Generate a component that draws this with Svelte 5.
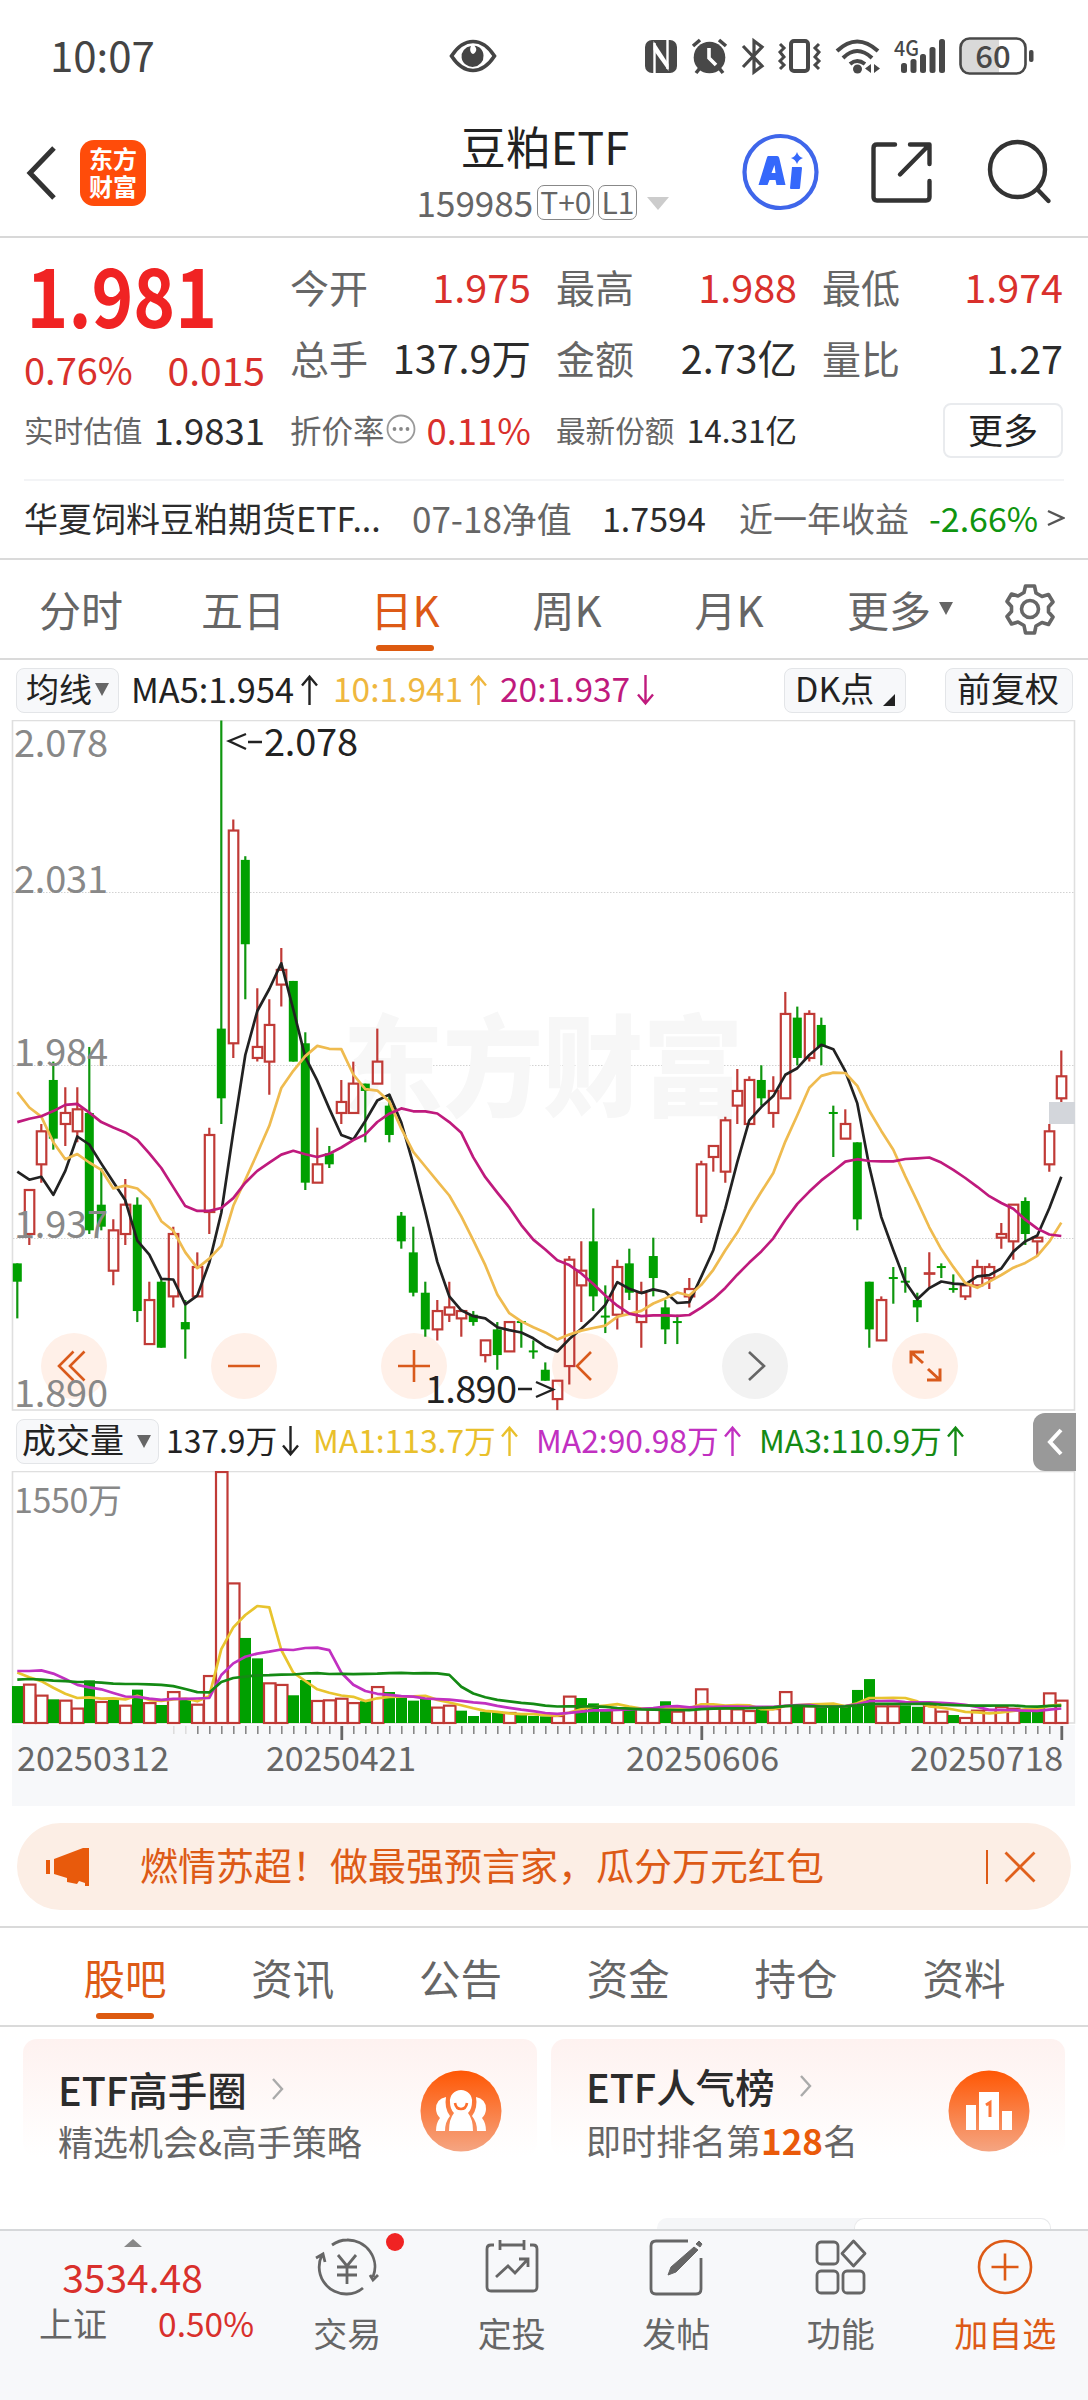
<script>
	// [open, close, high, low] in thousandths, then volume in 万
	const days = [
		[1930, 1925, 1930, 1915, 222], [1938, 1950, 1950, 1935, 237], [1957, 1966, 1968, 1952, 169],
		[1980, 1964, 1985, 1961, 140], [1968, 1971, 1978, 1962, 138], [1966, 1972, 1978, 1963, 89],
		[1971, 1939, 1989, 1938, 257], [1946, 1940, 1956, 1939, 130], [1928, 1939, 1942, 1924, 146],
		[1938, 1946, 1953, 1935, 107], [1946, 1917, 1948, 1914, 200], [1908, 1920, 1925, 1908, 123],
		[1925, 1907, 1926, 1907, 105], [1921, 1938, 1940, 1918, 191], [1914, 1912, 1920, 1904, 138],
		[1921, 1929, 1933, 1921, 113], [1944, 1965, 1967, 1938, 290], [1994, 1975, 2078, 1968, 1550],
		[1990, 2048, 2051, 1986, 862], [2040, 2017, 2041, 2002, 519], [1986, 1989, 2005, 1985, 393],
		[1985, 1995, 2002, 1976, 245], [2006, 2010, 2016, 2000, 235], [2007, 1985, 2007, 1985, 165],
		[1990, 1952, 1993, 1950, 259], [1952, 1957, 1967, 1952, 136], [1960, 1957, 1962, 1956, 140],
		[1971, 1974, 1980, 1968, 150], [1971, 1979, 1985, 1971, 123], [1979, 1977, 1979, 1963, 128],
		[1979, 1985, 1994, 1979, 222], [1973, 1965, 1976, 1963, 185], [1943, 1936, 1944, 1934, 154],
		[1933, 1922, 1940, 1921, 132], [1922, 1912, 1925, 1910, 146], [1912, 1917, 1920, 1909, 95],
		[1916, 1918, 1925, 1914, 107], [1915, 1917, 1917, 1910, 70], [1916, 1914, 1917, 1913, 37],
		[1905, 1909, 1909, 1903, 64], [1912, 1905, 1914, 1901, 64], [1906, 1914, 1914, 1906, 62],
		[1914, 1913.8, 1914, 1907, 47], [1906, 1906, 1909, 1904, 37], [1901, 1898, 1903, 1898, 35],
		[1893, 1898, 1898, 1890, 43], [1902, 1931, 1932, 1897, 163], [1924, 1928, 1936, 1914, 148],
		[1936, 1921, 1945, 1917, 115], [1915.5, 1915.5, 1924, 1911, 70], [1916, 1929, 1931, 1912, 84],
		[1930, 1922, 1934, 1920, 91], [1914, 1922, 1925, 1907, 88], [1932, 1926, 1937, 1921, 86],
		[1918, 1912, 1920, 1908, 128], [1914, 1914, 1916, 1908, 70], [1921, 1923, 1926, 1918, 82],
		[1943, 1957, 1958, 1941, 208], [1959, 1962, 1962, 1955, 90], [1955, 1969, 1970, 1952, 90],
		[1973, 1977, 1983, 1968, 84], [1968, 1980, 1981, 1968, 74], [1980, 1975, 1984, 1973, 90],
		[1971, 1977, 1981, 1967, 86], [1975, 1998, 2004, 1975, 191], [1997, 1986, 2000, 1984, 103],
		[1986, 1998, 1999, 1985, 103], [1995, 1989, 1997, 1984, 103], [1971, 1971, 1973, 1959, 99],
		[1964, 1968, 1972, 1964, 106], [1963, 1942, 1963, 1939, 198], [1925, 1912, 1925, 1907, 265],
		[1909, 1920, 1921, 1909, 103], [1926, 1926, 1929, 1919, 103], [1925, 1925, 1929, 1922, 103],
		[1920, 1918, 1922, 1914, 94], [1927.2, 1927.3, 1933, 1923, 107], [1929, 1929, 1930, 1926, 70],
		[1923, 1923, 1927, 1922, 43], [1921, 1924, 1924, 1920, 31], [1924, 1929, 1931, 1924, 76],
		[1926, 1929, 1930, 1923, 80], [1937, 1938, 1941, 1934, 99], [1936, 1946, 1946, 1931, 88],
		[1947, 1938, 1948, 1935, 80], [1936, 1937, 1937, 1932, 80], [1957, 1966, 1968, 1955, 183],
		[1975, 1981, 1988, 1974, 137.9]
	];

	const closes = days.map((d) => d[1]);
	const volumes = days.map((d) => d[4]);

	const x = (i) => 17.3 + i * 12;
	const priceY = (p) => 0.5 + (2078 - p) * 3.668;
	const volumeY = (v) => 252 - (v / 1550) * 251;

	// the window opens mid-history, so the first points of each average are given
	function average(values, size, head) {
		return values.map((_, i) => {
			if (i < size - 1) return head[i];
			let sum = 0;
			for (let k = i - size + 1; k <= i; k++) sum += values[k];
			return sum / size;
		});
	}
	const points = (values, scale) => values.map((v, i) => `${x(i)},${scale(v).toFixed(1)}`).join(' ');

	const priceLines = [
		['#222', average(closes, 5, [1955, 1952.8, 1953.6, 1948.7])],
		['#efbb4f', average(closes, 10, [1976.7, 1972.5, 1970, 1963, 1958.4, 1959.8, 1957.5, 1955.5, 1950.4])],
		['#bf1a7d', average(closes, 20, [1968.5, 1969.4, 1970.1, 1971.5, 1973.2, 1973.5, 1971.1, 1968.5, 1967, 1965.7, 1963.7, 1960, 1956, 1950.8, 1945.6, 1944.3, 1944.3, 1945.1, 1947.8])]
	];
	const volumeLines = [
		['#e8c42e', average(volumes, 5, [311, 282, 259, 218])],
		['#c130c1', average(volumes, 10, [321, 321, 325, 305, 272, 235, 220, 208, 185])],
		['#148a14', average(volumes, 20, [268, 272, 268, 261, 259, 253, 253, 249, 243, 241, 241, 239, 235, 228, 210, 191, 189, 253, 278])]
	];

	const priceLabels = [
		['2.078', 37],
		['2.031', 173],
		['1.984', 346],
		['1.937', 518],
		['1.890', 687]
	];
	const ticks = days.map((_, i) => i).filter((i) => i > 12);

	const quotes = [
		['今开', '1.975', true], ['最高', '1.988', true], ['最低', '1.974', true],
		['总手', '137.9万', false], ['金额', '2.73亿', false], ['量比', '1.27', false]
	];
	const periods = ['分时', '五日', '日K', '周K', '月K'];
	const sections = ['股吧', '资讯', '公告', '资金', '持仓', '资料'];
</script>

{#snippet arrow(up)}
	<svg class="arrow" class:down={!up} width="19" height="32" viewBox="0 0 19 32">
		<path d="M9.5 31V3M2 11.5 9.5 2.5 17 11.5" fill="none" stroke="currentColor" stroke-width="2.4" />
	</svg>
{/snippet}

<main>
	<div class="status">
		<span class="time">10:07</span>
		<svg class="eye" width="48" height="34" viewBox="0 0 48 34">
			<path d="M2.5 17Q12 2.500 24 2.500T45.500 17Q36 31.500 24 31.500T2.500 17Z" fill="none" stroke="#444" stroke-width="3.600" />
			<path d="M22 7a11 10.500 0 1 0 12.500 9.500c0-5-4-9.500-9-9.700 3 3 2 7-1.500 8.200-3-1-3.500-5-2-8Z" fill="#444" />
		</svg>
		<svg class="signals" width="430" height="50" viewBox="0 0 430 50">
			<g fill="#484848">
				<rect x="25" y="10" width="32" height="33" rx="7" />
				<path d="M34.500 43V13M47.500 10v29" fill="none" stroke="#fff" stroke-width="2.400" />
				<path d="M33.500 11l15 23v7l-15-21Z" fill="#fff" />
				<circle cx="89.500" cy="27.500" r="15.800" />
				<path d="M73 16l7-6M106 16l-7-6M80 38l-4 5M99 38l4 5" stroke="#484848" stroke-width="3.600" />
				<path d="M89 18v10l7 7" fill="none" stroke="#fff" stroke-width="3.600" />
			</g>
			<g fill="none" stroke="#484848" stroke-width="3.600">
				<path d="M123 16l19 20-8 6V11l8 6-19 20" stroke-width="3.200" />
				<rect x="171" y="11" width="17" height="30" rx="3" stroke-width="4" />
				<path d="M160 14l4 4-4 4 4 5-4 4 4 4-4 4M199 14l-4 4 4 4-4 5 4 4-4 4 4 4" stroke-width="3" />
				<path d="M217 21q20-19 41 0M223 28q14-14 29 0M230 34q7-6 15 0" stroke-width="4" />
			</g>
			<g fill="#484848">
				<circle cx="237.500" cy="39" r="4.500" />
				<path d="M251 34v9l-6-4.500ZM254 34v9l6-4.500Z" />
				<text x="274" y="26" font-size="21" font-weight="500" textLength="25" lengthAdjust="spacingAndGlyphs">4G</text>
				<rect x="281" y="33" width="6" height="10" rx="2.500" />
				<rect x="290.500" y="29" width="6" height="14" rx="2.500" />
				<rect x="300" y="24" width="6" height="19" rx="2.500" />
				<rect x="309.500" y="17" width="6" height="26" rx="2.500" />
				<rect x="319" y="9" width="6" height="34" rx="2.500" />
			</g>
			<path d="M379 9.500H350a9 9 0 0 0-9 9v15a9 9 0 0 0 9 9h29Z" fill="#d9d9d9" />
			<rect x="340.500" y="8.500" width="65" height="35" rx="9" fill="none" stroke="#484848" stroke-width="2.600" />
			<rect x="409" y="20" width="4.500" height="12" rx="2" fill="#484848" />
			<text x="373" y="37.500" font-size="31" font-weight="500" text-anchor="middle" fill="#484848">60</text>
		</svg>
	</div>

	<header>
		<svg class="back" width="34" height="56" viewBox="0 0 34 56">
			<path d="M30 3 6 28l24 25" fill="none" stroke="#333" stroke-width="5" />
		</svg>
		<div class="logo"><span>东方</span><span>财富</span></div>
		<div class="title">
			<h1>豆粕ETF</h1>
			<div class="code">
				159985<span class="tag">T+0</span><span class="tag">L1</span>
				<svg width="22" height="13" viewBox="0 0 22 13"><path d="M0 0h22L11 13Z" fill="#ccc" /></svg>
			</div>
		</div>
		<svg class="tools" width="330" height="80" viewBox="0 0 330 80">
			<circle cx="40.500" cy="40" r="36" fill="none" stroke="#3f66ea" stroke-width="4.200" />
			<path d="M28 24h9q2 0 2.500 3l6 26h-9l-1-5h-6l-2 5h-9l8-26q.8-3 1.500-3ZM31.500 41h4l-1-8Z" fill="#3568fb" fill-rule="evenodd" />
			<path d="M52 35h9q1 0 1 1l-2 20q0 1-1 1h-8q-1 0-1-1ZM57 20q1.500 5 6 6-4.500 1.500-6 6-1.500-4.500-6-6 4.500-1 6-6Z" fill="#3568fb" />
			<g fill="none" stroke="#333" stroke-width="4.400" stroke-linecap="round" stroke-linejoin="round">
				<path d="M155 12.500h-18q-3.500 0-3.500 3.500v49q0 3.500 3.500 3.500h49q3.500 0 3.500-3.500V49M170 12.500h19.500V32M189 13l-29 29.500" />
				<circle cx="277.500" cy="37.500" r="27.500" />
				<path d="M297.500 57.500 308.500 69" />
			</g>
		</svg>
	</header>

	<section class="quote">
		<div class="figures">
			<div class="price">
				<strong>1.981</strong>
				<div><span>0.76%</span><span>0.015</span></div>
			</div>
			<div class="grid">
				{#each quotes as [label, value, up]}
					<div class="pair">
						<span class="label">{label}</span>
						<span class="value" class:up>{value}</span>
					</div>
				{/each}
			</div>
		</div>
		<div class="extra">
			<div class="pair"><span>实时估值</span><b>1.9831</b></div>
			<div class="pair rate">
				<span>折价率</span>
				<svg width="30" height="30" viewBox="0 0 30 30">
					<circle cx="15" cy="15" r="13.500" fill="none" stroke="#999" stroke-width="1.800" />
					<g fill="#888"><circle cx="8.500" cy="15" r="1.900" /><circle cx="15" cy="15" r="1.900" /><circle cx="21.500" cy="15" r="1.900" /></g>
				</svg>
				<b class="up">0.11%</b>
			</div>
			<div class="pair share"><span>最新份额</span><b>14.31亿</b></div>
			<button class="more">更多</button>
		</div>
		<div class="fund">
			<span class="dark">华夏饲料豆粕期货ETF...</span>
			<span class="nav">07-18净值</span>
			<span class="dark">1.7594</span>
			<span>近一年收益</span>
			<span class="fall">-2.66%</span>
			<svg width="18" height="18" viewBox="0 0 18 18"><path d="M1 2l15 7-15 7" fill="none" stroke="#555" stroke-width="2.400" /></svg>
		</div>
	</section>

	<nav class="periods">
		{#each periods as period}
			<span class="tab" class:active={period === '日K'}>{period}</span>
		{/each}
		<span class="rest">更多<svg width="14" height="13" viewBox="0 0 14 13"><path d="M0 0h14L7 13Z" fill="#666" /></svg></span>
		<svg class="gear" width="52" height="52" viewBox="0 0 52 52" fill="none" stroke="#666" stroke-width="3.600" stroke-linejoin="round">
			<path d="M21.500 3h9l1.500 7 6 3.500 6.500-2 4.500 7.500-4.500 5v5l4.500 5-4.500 7.500-6.500-2-6 3.500-1.500 7h-9L20 42.500 14 39l-6.500 2L3 33.500l4.500-5v-5L3 18.500 7.500 11l6.500 2 6-3.500Z" />
			<circle cx="26" cy="26" r="8.500" />
		</svg>
	</nav>

	<div class="legend">
		<span class="chip ma">均线<svg width="14" height="13" viewBox="0 0 14 13"><path d="M0 0h14L7 13Z" fill="#666" /></svg></span>
		<span class="item ma5">MA5:1.954{@render arrow(true)}</span>
		<span class="item ma10">10:1.941{@render arrow(true)}</span>
		<span class="item ma20">20:1.937{@render arrow(false)}</span>
		<span class="chip dk">DK点<svg width="12" height="12" viewBox="0 0 12 12"><path d="M12 0v12H0Z" fill="#222" /></svg></span>
		<span class="chip fq">前复权</span>
	</div>

	<svg class="chart" width="1088" height="692" viewBox="0 0 1088 692">
		<rect x="12.500" y="0.500" width="1062" height="689.500" fill="#fff" stroke="#dfdfdf" stroke-width="1.600" />
		{#each [172.500, 345.500, 518.500] as y}
			<path d="M13 {y}H1074" stroke="#d2d2d2" stroke-dasharray="1.500 1.500" />
		{/each}
		<text class="mark" x="343" y="388" textLength="400" lengthAdjust="spacingAndGlyphs">东方财富</text>
		<g fill="#fff0e8">
			{#each [74, 244, 414, 585, 925] as cx}
				<circle {cx} cy="646" r="33" />
			{/each}
			<circle cx="755" cy="646" r="33" fill="#f2f2f2" />
		</g>
		<g fill="none" stroke="#d95a1c" stroke-width="2.600">
			<path d="M73.500 631.500 59 646l14.500 14.500M84.500 631.500 70 646l14.500 14.500" />
			<path d="M228 646h32M398 646h32M414 630v32" />
			<path d="M591 632l-14 14 14 14" />
			<path d="M749 632l15 14-15 14" stroke="#666" />
			<path d="M911 643.500V632h13M911 632l12 11M940 648.500V660h-13M940 660l-12-11" stroke-width="3" />
		</g>
		{#each days as [open, close, high, low], i}
			{@const rise = close > open}
			{@const top = priceY(Math.max(open, close))}
			{@const bottom = priceY(Math.min(open, close))}
			{#if rise}
				<g stroke="#c03a36" stroke-width="2.200" fill="none">
					<path d="M{x(i)} {priceY(high)}V{top}M{x(i)} {bottom}V{priceY(low)}" />
					<rect x={x(i) - 4.500} y={top} width="9.500" height={Math.max(bottom - top, 0.5)} />
				</g>
			{:else}
				<path d="M{x(i)} {priceY(high)}V{priceY(low)}" stroke="#0f960f" stroke-width="2.200" />
				<rect x={x(i) - 4.500} y={top - (bottom - top < 2 ? 1 : 0)} width="9" height={Math.max(bottom - top, 2)} fill="#00a000" />
			{/if}
		{/each}
		{#each priceLines as [color, values]}
			<polyline points={points(values, priceY)} fill="none" stroke={color} stroke-width="2.700" stroke-linejoin="round" />
		{/each}
		<g fill="#888" font-size="38">
			{#each priceLabels as [label, y]}
				<text x="14" {y} textLength="94">{label}</text>
			{/each}
		</g>
		<g fill="#222" font-size="38">
			<path d="M246 14l-17 7 17 8M248 22h14" fill="none" stroke="#222" stroke-width="2.400" />
			<text x="264" y="36" textLength="94">2.078</text>
			<text x="425" y="683" textLength="92">1.890</text>
			<path d="M518 669h14M536 662l17 7.500-17 7.500" fill="none" stroke="#222" stroke-width="2.400" />
		</g>
		<rect x="1049" y="382" width="26" height="22" fill="#d3d6db" />
	</svg>

	<div class="legend volume">
		<span class="chip vol">成交量<svg width="14" height="13" viewBox="0 0 14 13"><path d="M0 0h14L7 13Z" fill="#666" /></svg></span>
		<span class="item now">137.9万{@render arrow(false)}</span>
		<span class="item v1">MA1:113.7万{@render arrow(true)}</span>
		<span class="item v2">MA2:90.98万{@render arrow(true)}</span>
		<span class="item v3">MA3:110.9万{@render arrow(true)}</span>
		<span class="drawer">
			<svg width="18" height="28" viewBox="0 0 18 28"><path d="M15 2 4 14l11 12" fill="none" stroke="#fff" stroke-width="4" /></svg>
		</span>
	</div>

	<svg class="chart" width="1088" height="336" viewBox="0 0 1088 336">
		<rect x="12.500" y="0.500" width="1062" height="251.500" fill="#fff" stroke="#dfdfdf" stroke-width="1.600" />
		<rect x="12" y="254" width="1063" height="81" fill="#f7f8fa" />
		<text x="14" y="42" font-size="34" fill="#888" textLength="108">1550万</text>
		{#each volumes as volume, i}
			{#if i === 0 || closes[i] < closes[i - 1]}
				<rect x={x(i) - 5.300} y={volumeY(volume) - 1} width="11" height={253 - volumeY(volume)} fill="#00a000" />
			{:else}
				<rect x={x(i) - 5.300} y={volumeY(volume)} width="11.500" height={252 - volumeY(volume)} fill="#fff" stroke="#c03a36" stroke-width="2.200" />
			{/if}
		{/each}
		{#each volumeLines as [color, values]}
			<polyline points={points(values, volumeY)} fill="none" stroke={color} stroke-width="2.700" stroke-linejoin="round" />
		{/each}
		{#each ticks as i}
			{@const major = i % 30 === 27}
			<path d="M{x(i) + 0.500} 255v{major ? 14 : 8}" stroke={i < 15 ? '#ddd' : major ? '#666' : '#888'} stroke-width={major ? 2.800 : 1.600} />
		{/each}
		<g fill="#666" font-size="34">
			<text x="17" y="300" textLength="152">20250312</text>
			<text x="266" y="300" textLength="150">20250421</text>
			<text x="626" y="300" textLength="153">20250606</text>
			<text x="910" y="300" textLength="153">20250718</text>
		</g>
	</svg>

	<div class="banner">
		<svg width="46" height="40" viewBox="0 0 46 40" fill="#e85a0c">
			<path d="M1 13h4v14H1ZM9 12 38 1h6v38h-4v-3l-6-2-2 3-10-2v-4L9 27Z" />
		</svg>
		<span>燃情苏超！做最强预言家，瓜分万元红包</span>
		<i></i>
		<svg width="32" height="32" viewBox="0 0 32 32"><path d="M1.500 1.500l29 29M30.500 1.500l-29 29" stroke="#e0601c" stroke-width="2.800" /></svg>
	</div>

	<nav class="sections">
		{#each sections as section, i}
			<span class="tab" class:active={i === 0}>{section}</span>
		{/each}
	</nav>

	<div class="cards">
		<div class="card">
			<div class="words">
				<h2>ETF高手圈<svg width="14" height="24" viewBox="0 0 14 24"><path d="M2 2l9 10-9 10" fill="none" stroke="#aaa" stroke-width="2.400" /></svg></h2>
				<p>精选机会&amp;高手策略</p>
			</div>
			<svg width="82" height="82" viewBox="0 0 82 82">
				<defs>
					<linearGradient id="glow" x2="0" y2="1"><stop stop-color="#ff5704" /><stop offset="1" stop-color="#f5a582" /></linearGradient>
				</defs>
				<circle cx="41" cy="41" r="40.500" fill="url(#glow)" />
				<path d="M26 27q-10 2-10 12 0 5 4 9-4 5-4 13h9q0-9 5-15-6-8-4-19ZM56 27q10 2 10 12 0 5-4 9 4 5 4 13h-9q0-9-5-15 6-8 4-19Z" fill="#fff" />
				<path d="M41 20a11 11 0 0 0-11 12q0 7 4 11-5 6-5 18h24q0-12-5-18 4-4 4-11a11 11 0 0 0-11-12Z" fill="#fff" />
				<path d="M35 33q1 6 6 6t6-6" fill="none" stroke="#fd6e2c" stroke-width="2.600" />
			</svg>
		</div>
		<div class="card second">
			<div class="words">
				<h2>ETF人气榜<svg width="14" height="24" viewBox="0 0 14 24"><path d="M2 2l9 10-9 10" fill="none" stroke="#aaa" stroke-width="2.400" /></svg></h2>
				<p>即时排名第<b>128</b>名</p>
			</div>
			<svg width="82" height="82" viewBox="0 0 82 82">
				<circle cx="41" cy="41" r="40.500" fill="url(#glow)" />
				<path d="M31 22h20v38H31ZM18 35h10v25H18ZM54 41h10v19H54Z" fill="#fff" />
				<path d="M38 35l4-2.500V47" fill="none" stroke="#fd7637" stroke-width="3" />
			</svg>
		</div>
	</div>

	<div class="peek"><span></span></div>

	<footer>
		<div class="index">
			<svg width="18" height="8" viewBox="0 0 18 8"><path d="M9 0l9 8H0Z" fill="#888" /></svg>
			<strong>3534.48</strong>
			<div><span>上证</span><b>0.50%</b></div>
		</div>
		<div class="action">
			<svg width="64" height="60" viewBox="0 0 64 60" fill="none" stroke="#666" stroke-width="2.800">
				<path d="M17 8Q24 3 32 3a27 27 0 0 1 26 37M48 51q-7 6-16 6A27 27 0 0 1 7 18M1 21l7-4 2 8M63 38l-5 5-3-5M23 18l9 11 9-11M32 29v18M22 30h20M22 38h20" />
			</svg>
			<span>交易</span>
			<i class="dot"></i>
		</div>
		<div class="action">
			<svg width="64" height="60" viewBox="0 0 64 60" fill="none" stroke="#666" stroke-width="2.800">
				<path d="M14 8h-3q-4 0-4 4v38q0 4 4 4h42q4 0 4-4V12q0-4-4-4h-3M20 3v10M44 3v10M20 8h24M16 40l12-11 7 7 13-14M39 22h9v8" />
			</svg>
			<span>定投</span>
		</div>
		<div class="action">
			<svg width="64" height="60" viewBox="0 0 64 60" fill="none" stroke="#666" stroke-width="2.800">
				<path d="M44 4H12Q7 4 7 9v43q0 5 5 5h40q5 0 5-5V21" />
				<path d="M24 38l3-8L50 10l4 3-22 22ZM52 7l3-3 3 3-2 3Z" fill="#666" stroke-width="1" />
			</svg>
			<span>发帖</span>
		</div>
		<div class="action">
			<svg width="64" height="60" viewBox="0 0 64 60" fill="none" stroke="#666" stroke-width="2.800" stroke-linejoin="round">
				<rect x="8" y="5" width="21" height="22" rx="4" />
				<rect x="8" y="34" width="21" height="22" rx="4" />
				<rect x="34" y="34" width="21" height="22" rx="4" />
				<path d="M44.500 4 56 16.500 44.500 29 33 16.500Z" />
			</svg>
			<span>功能</span>
		</div>
		<div class="action add">
			<svg width="64" height="60" viewBox="0 0 64 60" fill="none" stroke="#dd5a16" stroke-width="2.600">
				<circle cx="32" cy="30" r="26" />
				<path d="M32 16.500v27M18.500 30h27" />
			</svg>
			<span>加自选</span>
		</div>
	</footer>
</main>

<style>
	:global(body) {
		background: #fff;
	}
	main {
		width: 1088px;
		height: 2400px;
		overflow: hidden;
		background: #fff;
		color: #666;
		font-family: 'Noto Sans CJK SC', sans-serif;
		display: flex;
		flex-direction: column;
	}
	svg {
		display: block;
		flex: none;
	}
	span,
	b,
	strong {
		white-space: nowrap;
	}
	b {
		font-weight: 400;
	}

	.status {
		height: 112px;
		display: flex;
		align-items: flex-start;
	}
	.time {
		width: 398px;
		padding: 29px 0 0 50px;
		font-size: 42px;
		line-height: 50px;
		color: #444;
	}
	.eye {
		margin: 39px 0 0 1px;
	}
	.signals {
		margin: 30px 0 0 123px;
	}

	header {
		height: 124px;
		border-bottom: 2px solid #d8d8d8;
		display: flex;
		align-items: flex-start;
	}
	.back {
		margin: 33px 0 0 24px;
	}
	.logo {
		box-sizing: border-box;
		width: 66px;
		height: 66px;
		margin: 28px 0 0 22px;
		padding-bottom: 3px;
		border-radius: 14px;
		background: #ff4c0a;
		color: #fff;
		font-size: 24px;
		font-weight: 700;
		line-height: 28px;
		display: flex;
		flex-direction: column;
		align-items: center;
		justify-content: center;
	}
	.title {
		width: 420px;
		margin-left: 189px;
		display: flex;
		flex-direction: column;
		align-items: center;
	}
	h1 {
		margin: 6px 0 0;
		font-size: 45px;
		font-weight: 400;
		line-height: 56px;
		color: #222;
	}
	.code {
		height: 36px;
		margin: 10px 0 0 -4px;
		font-size: 35px;
		display: flex;
		align-items: center;
		line-height: 36px;
	}
	.tag {
		margin-left: 4px;
		padding: 0 2px;
		height: 33px;
		border: 1.5px solid #888;
		border-radius: 7px;
		font-size: 30px;
		line-height: 30px;
	}
	.code svg {
		margin: 2px 0 0 10px;
	}
	.tools {
		margin: 20px 0 0 -15px;
	}

	.quote {
		height: 320px;
		padding: 0 24px;
		border-bottom: 2px solid #dadada;
	}
	.figures {
		height: 156px;
		padding-top: 13px;
		box-sizing: border-box;
		display: flex;
		gap: 25px;
	}
	.price {
		width: 241px;
		color: #d9302c;
	}
	.price strong {
		display: block;
		width: max-content;
		padding-left: 3px;
		font-size: 82px;
		font-weight: 700;
		line-height: 84px;
		color: #f02323;
		transform: scaleX(0.865);
		transform-origin: left;
	}
	.price div {
		display: flex;
		justify-content: space-between;
		padding-top: 9px;
		font-size: 39px;
		line-height: 50px;
	}
	.price span:first-child {
		font-size: 38px;
	}
	.grid {
		flex: 1;
		display: grid;
		grid-template-columns: repeat(3, 241px);
		grid-auto-rows: 71px;
		column-gap: 25px;
	}
	.pair {
		display: flex;
		align-items: center;
		justify-content: space-between;
	}
	.grid .pair {
		font-size: 39px;
		line-height: 68px;
		padding-bottom: 2px;
	}
	.value {
		font-size: 39.5px;
		color: #2c2c2c;
	}
	.up,
	.value.up {
		color: #d9302c;
	}
	.extra {
		height: 85px;
		border-bottom: 2px solid #f3f4f6;
		display: grid;
		grid-template-columns: repeat(4, 241px);
		column-gap: 25px;
		align-items: start;
	}
	.extra .pair {
		height: 70px;
		font-size: 29.6px;
	}
	.extra b {
		font-size: 36.5px;
		color: #2c2c2c;
	}
	.extra .rate {
		font-size: 31.5px;
	}
	.extra .rate svg {
		margin: 0 6px 0 1px;
	}
	.extra b.up {
		margin-left: auto;
		color: #d9302c;
		font-size: 36.5px;
	}
	.extra .share b {
		font-size: 31.5px;
	}
	.more {
		justify-self: end;
		width: 120px;
		height: 55px;
		margin-top: 9px;
		border: 2px solid #e9ebee;
		border-radius: 8px;
		background: #fff;
		font: 35px/44px 'Noto Sans CJK SC', sans-serif;
		color: #222;
		padding: 0 0 4px;
	}
	.fund {
		height: 73px;
		display: grid;
		grid-template-columns: 388px 190px 137px 190px 118px 18px;
		align-items: center;
		font-size: 34px;
	}
	.nav {
		font-size: 35px;
	}
	.dark {
		color: #2c2c2c;
	}
	.fall {
		color: #0f940f;
	}

	.periods {
		height: 98px;
		border-bottom: 2px solid #dadada;
		display: flex;
		align-items: center;
		font-size: 42px;
	}
	.tab {
		display: flex;
		flex-direction: column;
		align-items: center;
		line-height: 60px;
		padding: 12px 0 0;
		width: 162px;
	}
	.tab::after {
		content: '';
		width: 58px;
		height: 6px;
		margin: 6px 0 0;
		border-radius: 3px;
	}
	.tab.active {
		color: #dd5a16;
	}
	.tab.active::after {
		background: #dd5a10;
	}
	.rest {
		display: flex;
		align-items: center;
		width: 157px;
		padding: 0 0 1px 37px;
		line-height: 60px;
		gap: 8px;
	}

	.legend {
		height: 60px;
		padding-left: 16px;
		display: flex;
		align-items: center;
		font-size: 33.5px;
		line-height: 38px;
		color: #222;
	}
	.chip {
		box-sizing: border-box;
		height: 45px;
		padding: 0 0 5px 9px;
		border: 1.5px solid #e3e5e8;
		border-radius: 8px;
		background: #f7f8fa;
		display: flex;
		align-items: center;
		color: #222;
		font-size: 34px;
	}
	.item {
		display: flex;
		align-items: center;
		padding-bottom: 5px;
	}
	.arrow {
		margin: 4px 0 0 6px;
	}
	.arrow.down {
		transform: rotate(180deg);
	}
	.chip.ma {
		width: 103px;
		font-size: 33px;
	}
	.chip svg {
		margin-top: 4px;
	}
	.chip.ma svg {
		margin-left: 3px;
	}
	.ma5 {
		width: 202px;
		padding-left: 12px;
		font-size: 34.3px;
	}
	.ma10 {
		width: 167px;
		color: #efb73e;
	}
	.ma20 {
		width: 284px;
		color: #bf1a7d;
	}
	.chip.dk {
		width: 122px;
		padding-left: 10px;
	}
	.chip.dk svg {
		margin: 25px 0 0 9px;
	}
	.chip.fq {
		width: 128px;
		margin-left: 39px;
		padding-left: 11px;
	}

	.mark {
		font-size: 110px;
		font-weight: 900;
		fill: #f7f7f7;
	}

	.volume {
		height: 59px;
		font-size: 31.8px;
	}
	.volume .arrow {
		margin-left: 4px;
	}
	.vol {
		width: 143px;
		padding-left: 5px;
	}
	.vol svg {
		margin-left: 13px;
	}
	.now {
		width: 147px;
		padding-left: 7px;
	}
	.v1 {
		width: 223px;
		color: #e9c02b;
	}
	.v2 {
		width: 223px;
		color: #c130c1;
	}
	.v3 {
		color: #148a14;
	}
	.drawer {
		margin: 0 12px 0 auto;
		width: 43px;
		height: 58px;
		border-radius: 12px 0 0 12px;
		background: #999;
		display: flex;
		align-items: center;
		justify-content: center;
	}

	.banner {
		width: 1054px;
		height: 87px;
		margin: 16px 0 16px 17px;
		border-radius: 44px;
		background: #fceee5;
		color: #dd5a16;
		font-size: 38px;
		line-height: 50px;
		display: flex;
		align-items: center;
	}
	.banner svg:first-child {
		margin-left: 28px;
	}
	.banner span {
		width: 845px;
		padding-left: 49px;
		padding-bottom: 5px;
		box-sizing: border-box;
	}
	.banner i {
		width: 1.5px;
		height: 34px;
		margin: 0 16px 0 50px;
		background: #dd5a16;
	}

	.sections {
		height: 97px;
		padding-left: 41px;
		border-top: 2px solid #dadada;
		border-bottom: 2px solid #dadada;
		display: flex;
		align-items: center;
		font-size: 41.5px;
	}
	.sections .tab {
		width: 167.8px;
	}

	.cards {
		padding: 12px 23px 0;
		display: flex;
		gap: 14px;
	}
	.card {
		flex: 1;
		height: 118px;
		padding: 0 35px;
		border-radius: 14px;
		background: linear-gradient(#fef2f0, #fff);
		display: flex;
		justify-content: space-between;
	}
	.card > svg {
		margin-top: 31px;
	}
	h2 {
		margin: 25px 0 0;
		font-size: 39.5px;
		font-weight: 500;
		line-height: 50px;
		color: #2c2c2c;
		display: flex;
		align-items: center;
	}
	.second h2 {
		margin: 22px 0 3px;
	}
	h2 svg {
		margin-left: 24px;
	}
	p {
		margin: 3px 0 0;
		font-size: 35px;
		line-height: 48px;
		white-space: nowrap;
	}
	.second p {
		margin-top: 5px;
	}
	p b {
		color: #ea5a0a;
		font-weight: 700;
	}

	.peek {
		width: 394px;
		height: 11px;
		margin: 61px 0 0 657px;
		border-radius: 10px 10px 0 0;
		background: #f5f6f8;
		display: flex;
		justify-content: flex-end;
	}
	.peek span {
		width: 195px;
		border: 1.5px solid #e8e9eb;
		border-bottom: 0;
		border-radius: 10px 10px 0 0;
		background: #fff;
	}

	footer {
		flex: 1;
		border-top: 2px solid #d6d8da;
		background: #f7f8fa;
		display: flex;
	}
	.index {
		width: 265px;
		padding-top: 8px;
		display: flex;
		flex-direction: column;
		align-items: center;
		color: #d9302c;
	}
	.index strong {
		margin-top: 4px;
		font-size: 39px;
		font-weight: 400;
		line-height: 50px;
	}
	.index div {
		width: 265px;
		margin-top: -2px;
		padding: 0 11px 0 39px;
		box-sizing: border-box;
		display: flex;
		justify-content: space-between;
		font-size: 34px;
		line-height: 48px;
	}
	.index div b {
		font-size: 33.5px;
	}
	.index div span {
		color: #666;
	}
	.action {
		position: relative;
		width: 164.5px;
		padding-top: 6px;
		display: flex;
		flex-direction: column;
		align-items: center;
		font-size: 34px;
	}
	.action span {
		margin-top: 11px;
		line-height: 50px;
	}
	.action.add {
		color: #dd5a16;
	}
	.dot {
		position: absolute;
		left: 121px;
		top: 2px;
		width: 18px;
		height: 18px;
		border-radius: 50%;
		background: #f02323;
	}
</style>
